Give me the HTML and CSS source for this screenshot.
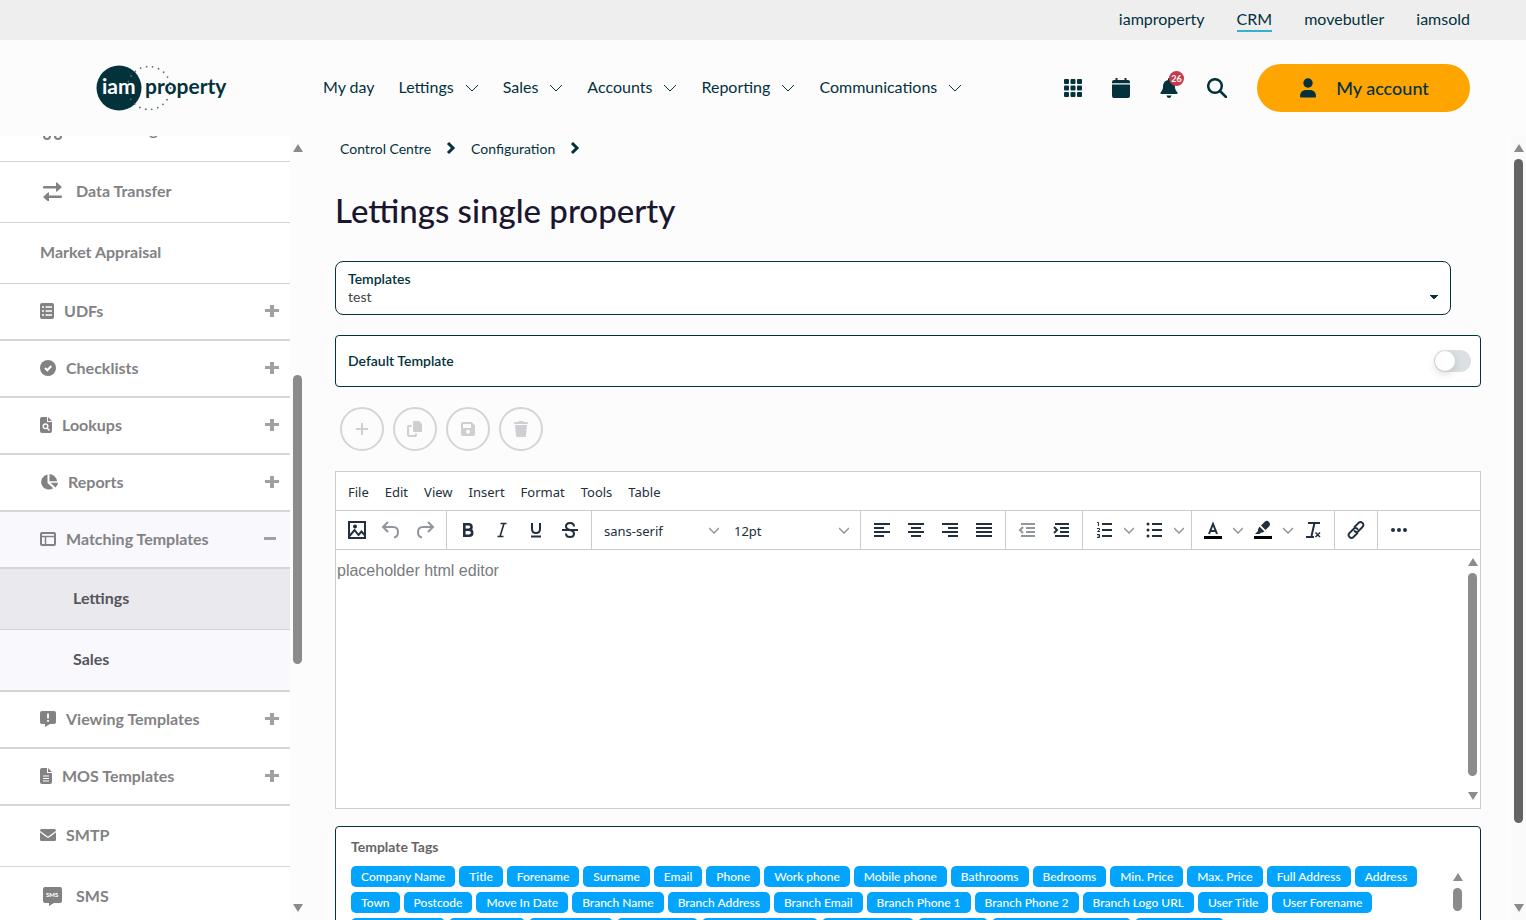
FILE: index.html
```html
<!DOCTYPE html>
<html lang="en">
<head>
    <meta charset="UTF-8">
    <meta name="viewport" content="width=device-width, initial-scale=1.0">
    <title>Lettings single property</title>
    <link rel="stylesheet" href="styles.css">
</head>
<body>

    <!-- Brand switcher -->
    <nav class="topbar" aria-label="Brands">
        <a href="#">iamproperty</a>
        <a href="#" class="active">CRM</a>
        <a href="#">movebutler</a>
        <a href="#">iamsold</a>
    </nav>

    <header class="header">
        <a href="#" class="logo" aria-label="iam property">
            <svg width="134" height="48" viewBox="0 0 134 48">
                <circle cx="23" cy="24" r="22.500" fill="#04323c"/>
                <circle cx="53" cy="24" r="21.500" fill="none" stroke="#5d7076" stroke-width="1.800" stroke-linecap="round" stroke-dasharray="0 6.140"/>
                <text x="6" y="30" class="logo-iam">iam</text>
                <text x="49" y="30" class="logo-property">property</text>
            </svg>
        </a>
        <nav class="main-nav" aria-label="Main">
            <a href="#">My day</a>
            <a href="#">Lettings <svg width="14" height="9" viewBox="0 0 14 9"><path d="M1 1l6 6 6-6"/></svg></a>
            <a href="#">Sales <svg width="14" height="9" viewBox="0 0 14 9"><path d="M1 1l6 6 6-6"/></svg></a>
            <a href="#">Accounts <svg width="14" height="9" viewBox="0 0 14 9"><path d="M1 1l6 6 6-6"/></svg></a>
            <a href="#">Reporting <svg width="14" height="9" viewBox="0 0 14 9"><path d="M1 1l6 6 6-6"/></svg></a>
            <a href="#">Communications <svg width="14" height="9" viewBox="0 0 14 9"><path d="M1 1l6 6 6-6"/></svg></a>
        </nav>
        <div class="header-tools">
            <button class="icon-btn" aria-label="Apps">
                <svg width="20" height="20" viewBox="0 0 20 20"><g fill="#04323c"><rect x="1" y="1" width="5" height="5" rx="1"/><rect x="7.500" y="1" width="5" height="5" rx="1"/><rect x="14" y="1" width="5" height="5" rx="1"/><rect x="1" y="7.500" width="5" height="5" rx="1"/><rect x="7.500" y="7.500" width="5" height="5" rx="1"/><rect x="14" y="7.500" width="5" height="5" rx="1"/><rect x="1" y="14" width="5" height="5" rx="1"/><rect x="7.500" y="14" width="5" height="5" rx="1"/><rect x="14" y="14" width="5" height="5" rx="1"/></g></svg>
            </button>
            <button class="icon-btn" aria-label="Calendar">
                <svg width="20" height="20" viewBox="0 0 20 20"><path fill="#04323c" d="M4.500 0h2v2h7V0h2v2H17q2 0 2 2v1.200H1V4q0-2 2-2h1.500zM1 6.500h18V18q0 2-2 2H3q-2 0-2-2z"/></svg>
            </button>
            <button class="icon-btn" aria-label="Notifications">
                <svg width="20" height="20" viewBox="0 0 20 20"><path fill="#04323c" d="M10 0q1 0 1 1v1c4 1 5 4 5 7 0 2 1 4 2.500 5.500q.5 1.500-1 1.500h-15q-1.500 0-1-1.500C3 13 4 11 4 9c0-3 1-6 5-7V1q0-1 1-1zM7.500 17.500h5q-.5 2.500-2.500 2.500t-2.500-2.500z"/></svg>
                <span class="badge">26</span>
            </button>
            <button class="icon-btn" aria-label="Search">
                <svg width="20" height="20" viewBox="0 0 20 20" fill="none" stroke="#04323c" stroke-width="2.500"><circle cx="8" cy="8" r="6.800"/><path d="M13 13l6 6" stroke-linecap="round"/></svg>
            </button>
            <button class="account-btn">
                <svg width="18" height="20" viewBox="0 0 18 20"><g fill="#04323c"><circle cx="10" cy="5" r="4.700"/><path d="M3 19.500q-1 0-1-1C2 14 5 12 8 12h4c3 0 6 2 6 6.500q0 1-1 1z"/></g></svg>
                My account
            </button>
        </div>
    </header>

    <div class="layout">

        <!-- Settings menu -->
        <aside class="sidebar">
            <ul class="menu">
                <li class="item scrolled"><a href="#">
                    <svg class="wide" width="24" height="24" viewBox="0 0 24 24" fill="none" stroke="#828285" stroke-width="2"><path d="M3 18V8h10v11H9M13 11h5l4 4v4h-2"/><circle cx="7" cy="20" r="3"/><circle cx="18" cy="20" r="3"/></svg>
                    Advertising</a></li>
                <li class="item"><a href="#">
                    <svg class="wide" width="24" height="20" viewBox="0 0 24 20" fill="#828285"><path d="M4 5h12V2q0-1 1-.5L22 6l-5 4.500q-1 .5-1-.5V7.500H4q-1 0-1-1.250T4 5zM21 14.500H9V12q0-1-1-.5L3 16l5 4.500q1 .5 1-.5v-3h12q1 0 1-1.250t-1-1.250z"/></svg>
                    Data Transfer</a></li>
                <li class="item"><a href="#">Market Appraisal</a></li>
                <li class="group"><a href="#">
                    <svg width="14" height="16" viewBox="0 0 14 16"><rect width="14" height="16" rx="2" fill="#828285"/><path stroke="#fff" stroke-width="1.500" d="M2 4h2M5.500 4H12M2 8h2M5.500 8H12M2 12h2M5.500 12H12"/></svg>
                    UDFs <span class="toggle plus"></span></a></li>
                <li class="group"><a href="#">
                    <svg width="16" height="16" viewBox="0 0 16 16"><circle cx="8" cy="8" r="8" fill="#828285"/><path d="M5 8l2.300 2.300L11.300 6" stroke="#fff" stroke-width="2" fill="none"/></svg>
                    Checklists <span class="toggle plus"></span></a></li>
                <li class="group"><a href="#">
                    <svg width="12" height="16" viewBox="0 0 12 16"><path fill="#828285" d="M0 2q0-2 2-2h5v5h5v9q0 2-2 2H2q-2 0-2-2zM8 0l4 4H8z"/><circle cx="5.500" cy="9.300" r="2.300" fill="none" stroke="#fff" stroke-width="1.400"/><path d="M7 11l2.500 2.500" stroke="#fff" stroke-width="1.400"/></svg>
                    Lookups <span class="toggle plus"></span></a></li>
                <li class="group"><a href="#">
                    <svg width="18" height="16" viewBox="0 0 18 16" fill="#828285"><path d="M7.500 .5V9l5.700 5.200A7.600 7.600 0 1 1 7.500 .5zM9.500 0a8 8 0 0 1 7.500 7.200H9.500zM10.500 8.800H18q-.2 3-2.500 4.700z"/></svg>
                    Reports <span class="toggle plus"></span></a></li>
                <li class="group open"><a href="#">
                    <svg width="16" height="14" viewBox="0 0 16 14" fill="none" stroke="#828285" stroke-width="2"><rect x="1" y="1" width="14" height="12" rx="1"/><path d="M1 4.500h14M5.500 4.500V13" stroke-width="1.500"/></svg>
                    Matching Templates <span class="toggle minus"></span></a></li>
                <li class="item sub current"><a href="#">Lettings</a></li>
                <li class="item sub last"><a href="#">Sales</a></li>
                <li class="group"><a href="#">
                    <svg width="16" height="16" viewBox="0 0 16 16"><path fill="#828285" d="M2 0h12q2 0 2 2v9q0 2-2 2h-4l-5 3v-3H2q-2 0-2-2V2q0-2 2-2z"/><path stroke="#fff" stroke-width="1.800" d="M8 2.500v5M8 9v1.800"/></svg>
                    Viewing Templates <span class="toggle plus"></span></a></li>
                <li class="group"><a href="#">
                    <svg width="12" height="16" viewBox="0 0 12 16"><path fill="#828285" d="M0 2q0-2 2-2h5v5h5v9q0 2-2 2H2q-2 0-2-2zM8 0l4 4H8z"/><path stroke="#fff" stroke-width="1.200" d="M3 8h6M3 10.500h6M3 13h6"/></svg>
                    MOS Templates <span class="toggle plus"></span></a></li>
                <li class="item"><a href="#">
                    <svg width="16" height="12" viewBox="0 0 16 12"><rect width="16" height="12" rx="1.500" fill="#828285"/><path d="M0 2.500l6.500 5q1.500 1 3 0l6.500-5" fill="none" stroke="#fff" stroke-width="1.300"/></svg>
                    SMTP</a></li>
                <li class="item"><a href="#">
                    <svg class="wide" width="24" height="20" viewBox="0 0 24 20"><path fill="#828285" d="M5 1h15q2 0 2 2v12q0 2-2 2h-6l-5 3v-3H5q-2 0-2-2V3q0-2 2-2z"/><text x="6" y="11" class="sms-text">SMS</text></svg>
                    SMS</a></li>
            </ul>
            <div class="scrollbar" aria-hidden="true"><i class="up"></i><div class="track side-track"><b></b></div><i class="down"></i></div>
        </aside>

        <main class="content">
            <nav class="breadcrumb" aria-label="Breadcrumb">
                <a href="#">Control Centre</a>
                <svg width="10" height="14" viewBox="0 0 10 14"><path d="M2 1l5 5-5 5"/></svg>
                <a href="#">Configuration</a>
                <svg width="10" height="14" viewBox="0 0 10 14"><path d="M2 1l5 5-5 5"/></svg>
            </nav>

            <h1>Lettings single property</h1>

            <div class="select-box">
                <label for="templates">Templates</label>
                <select id="templates"><option>test</option></select>
            </div>

            <div class="default-box">
                <label for="default-template">Default Template</label>
                <input type="checkbox" id="default-template" class="switch">
            </div>

            <div class="actions">
                <button aria-label="Add"><svg width="14" height="14" viewBox="0 0 14 14"><path d="M7 1v12M1 7h12" stroke="#cfcfd3" stroke-width="2"/></svg></button>
                <button aria-label="Copy"><svg width="16" height="16" viewBox="0 0 16 16"><path fill="#cfcfd3" d="M7 0h5l3 3v7q0 1-1 1H7q-1 0-1-1V1q0-1 1-1z"/><path d="M4.500 5H2q-1 0-1 1v8q0 1 1 1h6q1 0 1-1v-1.500" fill="none" stroke="#cfcfd3" stroke-width="2"/></svg></button>
                <button aria-label="Save"><svg width="14" height="14" viewBox="0 0 14 14"><path fill="#cfcfd3" fill-rule="evenodd" d="M2 0h8.500L14 3.500V12q0 2-2 2H2q-2 0-2-2V2q0-2 2-2zM2 2v4h8V2zM7 7.800a2 2 0 1 0 .01 0z"/></svg></button>
                <button aria-label="Delete"><svg width="14" height="16" viewBox="0 0 14 16"><path fill="#cfcfd3" d="M5 0h4l1 1h3q1 0 1 1t-1 1H1q-1 0-1-1t1-1h3zM1 4h12l-1 10.500q0 1.500-1.500 1.500h-7Q2 16 2 14.500z"/></svg></button>
            </div>

            <!-- Rich text editor -->
            <section class="editor">
                <div class="editor-menu">
                    <button>File</button>
                    <button>Edit</button>
                    <button>View</button>
                    <button>Insert</button>
                    <button>Format</button>
                    <button>Tools</button>
                    <button>Table</button>
                </div>
                <div class="toolbar">
                    <div class="tools">
                        <button aria-label="Image"><svg viewBox="0 0 24 24"><path fill="none" stroke="#222f3e" stroke-width="2" d="M4 4h16v16H4zM4.500 18l5-6 4 5 3-3.500 4 4.500"/><circle cx="10" cy="8.500" r="2" fill="#222f3e"/></svg></button>
                        <button aria-label="Undo" class="off"><svg viewBox="0 0 24 24"><path fill="none" stroke="#222f3e" stroke-width="2" d="M9 4L4 9l5 5M4.500 9H14q5 0 5 5t-4 5.500"/></svg></button>
                        <button aria-label="Redo" class="off"><svg viewBox="0 0 24 24"><path fill="none" stroke="#222f3e" stroke-width="2" d="M15 4l5 5-5 5M19.500 9H10q-5 0-5 5t4 5.500"/></svg></button>
                    </div>
                    <div class="tools">
                        <button aria-label="Bold"><svg viewBox="0 0 24 24"><path fill="none" stroke="#222f3e" stroke-width="2.600" d="M8.300 6.300h4.200q3 0 3 2.700t-3 2.700H8.300zM8.300 11.700H13q3.200 0 3.200 3t-3.200 3H8.300z"/></svg></button>
                        <button aria-label="Italic"><svg viewBox="0 0 24 24"><path fill="none" stroke="#222f3e" stroke-width="1.600" d="M10.500 5.500h6M7.500 18.500h6M14 5.500l-4 13"/></svg></button>
                        <button aria-label="Underline"><svg viewBox="0 0 24 24"><path fill="none" stroke="#222f3e" stroke-width="2" d="M8 5v6q0 4 4 4t4-4V5M7 18.500h10"/></svg></button>
                        <button aria-label="Strikethrough"><svg viewBox="0 0 24 24"><path fill="none" stroke="#222f3e" stroke-width="2" d="M4 12h16M16 8.500Q16 5 12 5T8 8.500Q8 11 12 12t4 3.500q0 3.500-4 3.500t-4-3.500"/></svg></button>
                    </div>
                    <div class="tools">
                        <select class="font-select" aria-label="Font"><option>sans-serif</option></select>
                        <select class="font-select" aria-label="Font size"><option>12pt</option></select>
                    </div>
                    <div class="tools">
                        <button aria-label="Align left"><svg viewBox="0 0 24 24"><path stroke="#222f3e" stroke-width="2" d="M4 6h16M4 10h10M4 14h16M4 18h10"/></svg></button>
                        <button aria-label="Align centre"><svg viewBox="0 0 24 24"><path stroke="#222f3e" stroke-width="2" d="M4 6h16M7 10h10M4 14h16M7 18h10"/></svg></button>
                        <button aria-label="Align right"><svg viewBox="0 0 24 24"><path stroke="#222f3e" stroke-width="2" d="M4 6h16M10 10h10M4 14h16M10 18h10"/></svg></button>
                        <button aria-label="Justify"><svg viewBox="0 0 24 24"><path stroke="#222f3e" stroke-width="2" d="M4 6h16M4 10h16M4 14h16M4 18h16"/></svg></button>
                    </div>
                    <div class="tools">
                        <button aria-label="Outdent" class="off"><svg viewBox="0 0 24 24"><path fill="none" stroke="#222f3e" stroke-width="2" d="M6 6h14M11 10h9M11 14h9M6 18h14M8 9l-3 3 3 3"/></svg></button>
                        <button aria-label="Indent"><svg viewBox="0 0 24 24"><path fill="none" stroke="#222f3e" stroke-width="2" d="M6 6h14M11 10h9M11 14h9M6 18h14M5 9l3 3-3 3"/></svg></button>
                    </div>
                    <div class="tools">
                        <button aria-label="Numbered list" class="split"><svg viewBox="0 0 24 24"><path stroke="#222f3e" stroke-width="2" d="M10 6h10M10 12h10M10 18h10"/><path fill="none" stroke="#222f3e" d="M5 4.500h1.500V8M5 10.500h2.500V12L5.500 13.500H8M5 16.500h2.500v3H5M5.500 18h2"/></svg><svg class="arrow" viewBox="0 0 10 10"><path d="M0 3l5 5 5-5"/></svg></button>
                        <button aria-label="Bullet list" class="split"><svg viewBox="0 0 24 24"><path stroke="#222f3e" stroke-width="2" d="M10 6h10M10 12h10M10 18h10"/><g fill="#222f3e"><circle cx="6" cy="6" r="1.500"/><circle cx="6" cy="12" r="1.500"/><circle cx="6" cy="18" r="1.500"/></g></svg><svg class="arrow" viewBox="0 0 10 10"><path d="M0 3l5 5 5-5"/></svg></button>
                    </div>
                    <div class="tools">
                        <button aria-label="Text colour" class="split"><svg viewBox="0 0 24 24"><path stroke="#000" stroke-width="3" d="M3 19.500h18"/><path fill="none" stroke="#222f3e" stroke-width="2" d="M8 16l4-10 4 10M9.500 13h5"/></svg><svg class="arrow" viewBox="0 0 10 10"><path d="M0 3l5 5 5-5"/></svg></button>
                        <button aria-label="Highlight" class="split"><svg viewBox="0 0 24 24"><path stroke="#000" stroke-width="3" d="M3 19.500h18"/><path fill="#222f3e" d="M8.500 8.500l5 5q-2 1.500-3.500 1l-1.500 1.500H4L7 13q-.5-2 1.500-4.500zM10 7.500l4-4q2-1.500 4 .5t.5 4l-4 4z"/></svg><svg class="arrow" viewBox="0 0 10 10"><path d="M0 3l5 5 5-5"/></svg></button>
                        <button aria-label="Clear formatting"><svg viewBox="0 0 24 24"><path fill="none" stroke="#222f3e" stroke-width="2" d="M7 5h12M13.500 5l-3 13M5 19h8"/><path stroke="#222f3e" stroke-width="1.500" d="M14.500 14.500l4.500 4.500M19 14.500L14.500 19"/></svg></button>
                    </div>
                    <div class="tools">
                        <button aria-label="Link"><svg viewBox="0 0 24 24"><path fill="none" stroke="#222f3e" stroke-width="1.800" stroke-linecap="round" d="M13.500 15l-4 4q-2 2-4 0t0-4l4-4q2-2 4 0M10.500 9l4-4q2-2 4 0t0 4l-4 4q-2 2-4 0"/></svg></button>
                    </div>
                    <div class="tools">
                        <button aria-label="More"><svg viewBox="0 0 24 24"><g fill="#222f3e"><circle cx="6" cy="12" r="2"/><circle cx="12" cy="12" r="2"/><circle cx="18" cy="12" r="2"/></g></svg></button>
                    </div>
                </div>
                <div class="editor-body">
                    <textarea aria-label="Template body" placeholder="placeholder html editor"></textarea>
                    <div class="scrollbar" aria-hidden="true"><i class="up"></i><div class="track editor-track"><b></b></div><i class="down"></i></div>
                </div>
            </section>

            <section class="tags-box">
                <div class="tags">
                    <h2>Template Tags</h2>
                    <div class="tag-row">
                        <button>Company Name</button>
                        <button>Title</button>
                        <button>Forename</button>
                        <button>Surname</button>
                        <button>Email</button>
                        <button>Phone</button>
                        <button>Work phone</button>
                        <button>Mobile phone</button>
                        <button>Bathrooms</button>
                        <button>Bedrooms</button>
                        <button>Min. Price</button>
                        <button>Max. Price</button>
                        <button>Full Address</button>
                        <button>Address</button>
                    </div>
                    <div class="tag-row">
                        <button>Town</button>
                        <button>Postcode</button>
                        <button>Move In Date</button>
                        <button>Branch Name</button>
                        <button>Branch Address</button>
                        <button>Branch Email</button>
                        <button>Branch Phone 1</button>
                        <button>Branch Phone 2</button>
                        <button>Branch Logo URL</button>
                        <button>User Title</button>
                        <button>User Forename</button>
                    </div>
                    <div class="tag-row">
                        <button>User Surname</button>
                        <button>User Email</button>
                        <button>User Mobile</button>
                        <button>User Phone</button>
                        <button>Company Website</button>
                        <button>Property Title</button>
                        <button>Signature</button>
                        <button>Unsubscribe Web Link</button>
                        <button>Current Date</button>
                    </div>
                </div>
                <div class="scrollbar" aria-hidden="true"><i class="up"></i><div class="track tags-track"><b></b></div></div>
            </section>
        </main>

        <div class="scrollbar page-scrollbar" aria-hidden="true"><i class="up"></i><div class="track page-track"><b></b></div><i class="down"></i></div>
    </div>

</body>
</html>
```
FILE: styles.css
```css
* {
    box-sizing: border-box;
}
body {
    font-family: Lato, sans-serif;
    font-size: 16px;
    margin: 0;
    height: 100vh;
    display: flex;
    flex-direction: column;
    overflow: hidden;
    background-color: #fcfcfd;
    color: #04323c;
}
a {
    color: inherit;
    text-decoration: none;
}
button, select, textarea {
    font-family: inherit;
    color: inherit;
    background: none;
    border: none;
    padding: 0;
    margin: 0;
}
button {
    cursor: pointer;
}
svg {
    flex-shrink: 0;
}

/* Top bar */
.topbar {
    display: flex;
    flex-shrink: 0;
    justify-content: flex-end;
    align-items: center;
    gap: 32px;
    height: 40px;
    padding-right: 56px;
    background-color: #eeeeee;
}
.topbar a {
    line-height: 22px;
    border-bottom: 2px solid transparent;
}
.topbar .active {
    border-color: #34b0d0;
}

/* Header */
.header {
    display: flex;
    flex-shrink: 0;
    align-items: center;
    height: 96px;
    padding: 0 56px 0 96px;
}
.logo {
    display: flex;
    width: 227px;
}
.logo-iam, .logo-property {
    font-weight: bold;
    font-size: 21px;
    fill: #04323c;
}
.logo-iam {
    fill: white;
}
.main-nav {
    display: flex;
    gap: 24px;
    padding-bottom: 3px;
}
.main-nav a {
    display: flex;
    align-items: center;
    gap: 11px;
}
.main-nav svg {
    margin-top: 4px;
}
.main-nav path {
    fill: none;
    stroke: #04323c;
}
.header-tools {
    display: flex;
    align-items: center;
    gap: 28px;
    margin-left: auto;
}
.icon-btn {
    position: relative;
    display: flex;
}
.badge {
    position: absolute;
    top: -7px;
    right: -5px;
    width: 15px;
    height: 15px;
    border-radius: 50%;
    background-color: #c53a4c;
    color: white;
    font-size: 9px;
    font-weight: bold;
    line-height: 15px;
}
.account-btn {
    display: flex;
    align-items: center;
    justify-content: center;
    gap: 20px;
    width: 213px;
    height: 48px;
    margin-left: 2px;
    border-radius: 24px;
    background-color: #fea500;
    font-size: 18px;
    font-weight: 500;
}

/* Page body */
.layout {
    display: flex;
    flex: 1;
    min-height: 0;
}
.sidebar {
    display: flex;
    overflow: hidden;
}
.menu {
    width: 290px;
    margin: 0;
    padding: 0;
    list-style: none;
    background-color: white;
    overflow: hidden;
}
.menu a {
    display: flex;
    align-items: center;
    gap: 10px;
    padding: 0 10px 2px 40px;
    color: #828285;
    font-size: 16px;
    font-weight: bold;
}
.item a {
    height: 61px;
    border-bottom: 1px solid #d5d5d7;
}
.group a {
    height: 57px;
    border-bottom: 2px solid #d5d5d7;
}
.menu .item a {
    padding-bottom: 3px;
}
.menu .wide {
    margin-right: 2px;
}
/* First row is partly scrolled under the header */
.menu .scrolled {
    margin-top: -35px;
}
.menu .scrolled a {
    padding-bottom: 6px;
}
.open a {
    background-color: #f8f8fd;
}
.menu .sub a {
    padding-left: 73px;
    background-color: #f8f8fd;
    color: #55555a;
}
.menu .current a {
    background-color: #eaeaee;
}
.last a {
    height: 62px;
    border-bottom-width: 2px;
}
.sms-text {
    font-size: 6px;
    font-weight: 900;
    fill: white;
}

/* Plus and minus signs of the menu groups */
.toggle {
    width: 14px;
    height: 12px;
    margin: 0 1px 0 auto;
    background: linear-gradient(#a0a1a4, #a0a1a4) center / 100% 3px no-repeat;
}
.plus {
    background: linear-gradient(#a0a1a4, #a0a1a4) center / 100% 3px no-repeat, linear-gradient(#a0a1a4, #a0a1a4) center / 4px 100% no-repeat;
}
.minus {
    width: 12px;
    margin-right: 4px;
}

/* Scrollbars */
.scrollbar {
    display: flex;
    flex-direction: column;
    flex-shrink: 0;
    align-items: center;
    width: 15px;
    padding: 8px 0;
}
.up, .down {
    border: 5px solid transparent;
    border-top-width: 0;
    border-bottom: 8px solid #8b8b8b;
}
.down {
    border-bottom-width: 0;
    border-top: 8px solid #8b8b8b;
}
.track {
    display: grid;
    flex: 1;
    width: 9px;
    margin: 7px 0;
}
.track b {
    grid-row: 2;
    border-radius: 5px;
    background-color: #8b8b8b;
}
.side-track {
    grid-template-rows: 216fr 289fr 233fr;
}
.page-track {
    grid-template-rows: 0fr 664fr 74fr;
}
.page-track b {
    background-color: #636363;
}
.editor-track {
    margin: 7px 0 16px;
    grid-template-rows: 0 1fr;
}
.tags-track {
    flex: none;
    grid-template-rows: 0 23px;
}
.page-scrollbar {
    background-color: #fafafa;
}

/* Content */
.content {
    flex: 1;
    min-width: 0;
    padding: 0 30px;
    overflow: hidden;
}
.breadcrumb {
    display: flex;
    align-items: center;
    gap: 15px;
    padding: 4px 5px 0;
    font-size: 14px;
    line-height: 18px;
}
.breadcrumb path {
    fill: none;
    stroke: #04323c;
    stroke-width: 3;
}
h1 {
    margin: 32px 0 31px;
    color: #1b1530;
    font-size: 33px;
    font-weight: 500;
    line-height: 40px;
}
.select-box {
    display: flex;
    flex-direction: column;
    margin-right: 30px;
    padding: 8px 12px;
    border: 1px solid #04323c;
    border-radius: 8px;
    background-color: white;
}
.select-box label, .default-box label {
    font-size: 14px;
    font-weight: 600;
    line-height: 18px;
}
.select-box select {
    height: 18px;
    padding-bottom: 2px;
    appearance: none;
    color: #444;
    font-size: 14px;
    background: linear-gradient(to bottom left, #04323c 50%, transparent 0) right 4px center / 4px 5px no-repeat, linear-gradient(to bottom right, #04323c 50%, transparent 0) right 0 center / 4px 5px no-repeat;
}
.default-box {
    display: flex;
    align-items: center;
    justify-content: space-between;
    height: 52px;
    margin: 20px 0;
    padding: 0 9px 0 12px;
    border: 1px solid #04323c;
    border-radius: 4px;
    background-color: white;
}
.switch {
    width: 37px;
    height: 22px;
    margin: 0;
    appearance: none;
    border-radius: 11px;
    background-color: #dbe0e3;
}
.switch::before {
    content: "";
    display: block;
    width: 20px;
    height: 20px;
    margin: 1px;
    border-radius: 50%;
    background-color: white;
    box-shadow: 0 3px 8px rgba(0, 0, 0, 0.15);
}
.actions {
    display: flex;
    gap: 9px;
    padding: 0 5px;
}
.actions button {
    display: flex;
    align-items: center;
    justify-content: center;
    width: 44px;
    height: 44px;
    border: 2px solid #d5d5d8;
    border-radius: 50%;
}

/* Editor */
.editor {
    margin: 20px 0 17px;
    border: 1px solid #cccccc;
    background-color: white;
    color: #222f3e;
    font-family: "Noto Sans", sans-serif;
}
.editor-menu {
    display: flex;
    gap: 16px;
    height: 38px;
    padding: 2px 12px 0;
}
.editor-menu button {
    font-size: 13px;
}
.toolbar {
    display: flex;
    height: 40px;
    border: 1px solid #cccccc;
    border-width: 1px 0;
}
.tools {
    display: flex;
    padding: 0 4px;
    border-right: 1px solid #cccccc;
}
.tools:last-child {
    border-right: none;
}
.tools button {
    display: flex;
    align-items: center;
    justify-content: center;
    width: 34px;
}
.tools svg {
    width: 24px;
    height: 24px;
}
.tools .split {
    width: 50px;
    gap: 8px;
    padding-left: 2px;
}
.tools .arrow {
    width: 10px;
    height: 10px;
}
.arrow path {
    fill: none;
    stroke: #8f959c;
    stroke-width: 1.5;
}
.off {
    opacity: 0.5;
}
.font-select {
    width: 130px;
    padding: 2px 8px 0;
    appearance: none;
    font-size: 13px;
    background: url("data:image/svg+xml,%3Csvg xmlns='http://www.w3.org/2000/svg' viewBox='0 0 10 10'%3E%3Cpath d='M0 3l5 5 5-5' fill='none' stroke='%238f959c' stroke-width='1.5'/%3E%3C/svg%3E") right 7px center / 10px 10px no-repeat;
}
.editor-body {
    display: flex;
}
.editor-body textarea {
    flex: 1;
    height: 258px;
    padding: 12px 1px;
    resize: none;
    outline: none;
    font-family: "Liberation Sans", Arial, sans-serif;
    font-size: 16px;
}
.editor-body textarea::placeholder {
    color: #777b80;
}

/* Template tags */
.tags-box {
    display: flex;
    justify-content: space-between;
    height: 200px;
    padding: 11px 15px;
    border: 1px solid #04323c;
    border-radius: 4px;
    background-color: white;
}
.tags h2 {
    margin: 0 0 10px;
    color: #666;
    font-size: 14px;
    font-weight: bold;
    line-height: 18px;
}
.tag-row {
    display: flex;
    gap: 4px;
    margin-bottom: 5px;
}
.tag-row button {
    height: 21px;
    padding: 0 10px;
    border-radius: 5px;
    background-color: #02a4fd;
    color: white;
    font-size: 12px;
    font-weight: 500;
    white-space: nowrap;
}
.tags-box .scrollbar {
    padding-top: 35px;
}
```
